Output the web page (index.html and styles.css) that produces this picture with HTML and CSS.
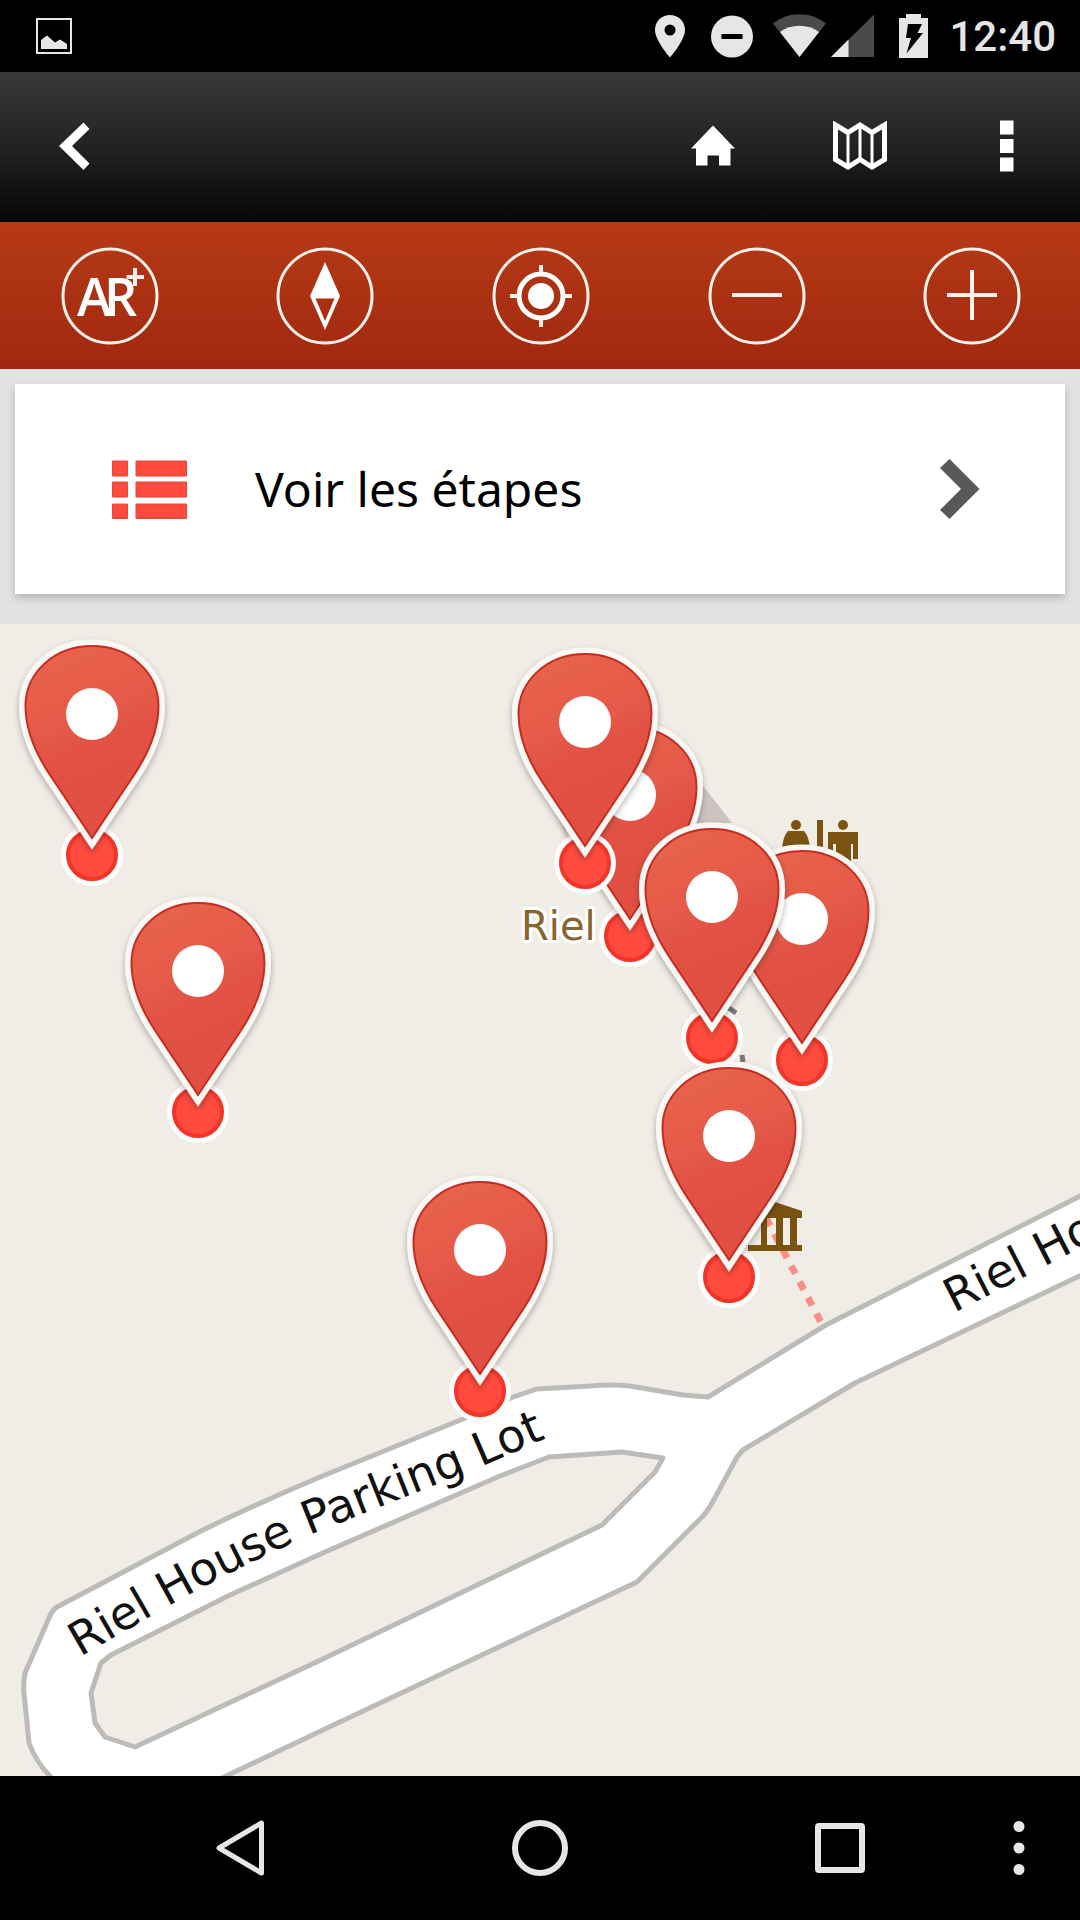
FILE: index.html
```html
<!DOCTYPE html>
<html lang="fr">
<head>
<meta charset="utf-8">
<meta name="viewport" content="width=device-width, initial-scale=1">
<title>Carte du circuit</title>
<link rel="stylesheet" href="styles.css">
</head>
<body>
<div class="screen">
  <div class="status">
    <svg class="status-shot" width="36" height="36" viewBox="0 0 36 36" aria-hidden="true"><rect x="1" y="1" width="34" height="34" fill="none" stroke="#e6e6e6" stroke-width="2"/><path d="M5 31V22L11 17.500L19 24.500L24 21.500L31 26V31z" fill="#e6e6e6"/></svg>
    <svg width="42" height="44" viewBox="0 0 42 44" aria-hidden="true"><path fill="#e6e6e6" fill-rule="evenodd" d="M21 1C12.500 1 6 7.500 6 16C6 26.500 21 43.500 21 43.500S36 26.500 36 16C36 7.500 29.500 1 21 1zM21 10.500a5.500 5.500 0 1 1 0 11a5.500 5.500 0 1 1 0-11z"/></svg>
    <svg width="42" height="44" viewBox="0 0 42 44" aria-hidden="true"><circle cx="21" cy="22.500" r="21" fill="#e6e6e6"/><path d="M10.500 22.500h21" stroke="#000" stroke-width="5"/></svg>
    <div class="signal">
      <svg width="53" height="44" viewBox="0 0 53 44" aria-hidden="true"><path d="M26.500 43L0 9.500C15-3 38-3 53 9.500z" fill="#4a4a4a"/><path d="M26.500 43L7 18C18 9.500 35 9.500 46 18z" fill="#e6e6e6"/></svg>
      <svg width="44" height="44" viewBox="0 0 44 44" aria-hidden="true"><path d="M0 43H43V0.500z" fill="#4a4a4a"/><path d="M0 43H17.500V25.500z" fill="#e6e6e6"/></svg>
    </div>
    <svg width="34" height="44" viewBox="0 0 34 44" aria-hidden="true"><path d="M4 4H11V0H26V4H33V44H4z" fill="#e6e6e6"/><path d="M13 10H27L22.500 19H28L11.500 39.500L16 24H11z" fill="#000"/></svg>
    <time class="clock">12:40</time>
  </div>

  <header class="appbar">
    <button class="bar-btn" type="button" aria-label="Retour"><svg width="32" height="52" viewBox="0 0 32 52"><path d="M25.500 1.500L31.500 8L14 25L31.500 42.500L25.500 49L1 25z" fill="#fff"/></svg></button>
    <nav class="actions" aria-label="Actions">
      <button class="bar-btn" type="button" aria-label="Accueil"><svg width="44" height="52" viewBox="0 0 44 52"><path d="M22 4.500L44 27.500H39.500V44.500H28V34.500H16.500V44.500H5V27.500H0z" fill="#fff"/></svg></button>
      <button class="bar-btn" type="button" aria-label="Carte"><svg width="54" height="52" viewBox="0 0 54 52"><path d="M2.500 4L15 11.500L27 4L39 11.500L51.500 4V38.500L39 46L27 38.500L15 46L2.500 38.500z" fill="none" stroke="#fff" stroke-width="5"/><path d="M15 11v34M27 5v34M39 11v34" stroke="#fff" stroke-width="3"/></svg></button>
      <button class="bar-btn" type="button" aria-label="Menu"><svg width="14" height="54" viewBox="0 0 14 54"><path d="M0 0.500h13.500v14H0zM0 19h13.500v14H0zM0 37.500h13.500v14H0z" fill="#fff"/></svg></button>
    </nav>
  </header>

  <nav class="toolbar" aria-label="Outils de carte">
    <button class="tool" type="button" aria-label="Réalité augmentée"><svg width="98" height="98" viewBox="-49 -49 98 98"><circle class="ring" r="47"/><g class="ar"><text x="-33" y="20">A</text><text x="-6" y="20">R</text></g><path class="thin" d="M16.500-19h17.500M25-28v18"/></svg></button>
    <button class="tool" type="button" aria-label="Boussole"><svg width="98" height="98" viewBox="-49 -49 98 98"><circle class="ring" r="47"/><path d="M0-34L15 0L0 34L-15 0z" fill="#fff"/><path d="M-9.500 2.500h19L0 25z" fill="#ab2e12"/></svg></button>
    <button class="tool" type="button" aria-label="Ma position"><svg width="98" height="98" viewBox="-49 -49 98 98"><circle class="ring" r="47"/><circle r="22" fill="none" stroke="#fff" stroke-width="5"/><circle r="13" fill="#fff"/><path class="thin" d="M-31 0h9M22 0h9M0-31v9M0 22v9"/></svg></button>
    <button class="tool" type="button" aria-label="Zoom arrière"><svg width="98" height="98" viewBox="-49 -49 98 98"><circle class="ring" r="47"/><path class="thin" d="M-25-1h50"/></svg></button>
    <button class="tool" type="button" aria-label="Zoom avant"><svg width="98" height="98" viewBox="-49 -49 98 98"><circle class="ring" r="47"/><path class="thin" d="M-25-1h50M0-26v50"/></svg></button>
  </nav>

  <div class="panel">
    <a class="card" href="#etapes">
      <svg width="75" height="60" viewBox="0 0 75 60" aria-hidden="true"><path d="M.5 2H15.500V17H.5zM24 2H74.500V17H24zM.5 23H15.500V38H.5zM24 23H74.500V38H24zM.5 45H15.500V59.500H.5zM24 45H74.500V59.500H24z" fill="#ff4b3e" stroke="#e84438"/></svg>
      <span class="card-label">Voir les étapes</span>
      <svg width="40" height="60" viewBox="0 0 40 60" aria-hidden="true"><path d="M9.500 0L39.500 30L9.500 60L0 51L21 30L0 9z" fill="#595959"/></svg>
    </a>
  </div>

  <main class="map">
    <svg class="map-canvas" viewBox="0 0 1080 1152" role="img" aria-label="Plan des étapes">
      <defs>
        <linearGradient id="pin-fill" x1="0.200" y1="0" x2="0.500" y2="1"><stop offset="0" stop-color="#e8634c"/><stop offset="0.400" stop-color="#e55a48"/><stop offset="0.600" stop-color="#e05043"/><stop offset="1" stop-color="#e04f42"/></linearGradient>
        <filter id="pin-shadow" x="-20%" y="-20%" width="140%" height="140%"><feDropShadow dx="0" dy="3" stdDeviation="3" flood-color="#000" flood-opacity="0.300"/></filter>
        <path id="teardrop" d="M0-68C38-68 66.500-41 66.500-8C66.500 18 56 40 42 61L0 124L-42 61C-56 40-66.500 18-66.500-8C-66.500-41-38-68 0-68z"/>
        <g id="pin">
          <circle cy="141" r="31" fill="#fff"/><circle cy="141" r="24" fill="#ff4b3e" stroke="#f23528" stroke-width="4"/>
          <use href="#teardrop" fill="#faf8f5" stroke="#faf8f5" stroke-width="13" filter="url(#pin-shadow)"/>
          <use href="#teardrop" fill="url(#pin-fill)" stroke="#c72b20" stroke-width="2"/>
          <circle r="26" fill="#fff"/>
        </g>
        <path id="lot-line" d="M80 1033L172 980Q240 942 312 910L480 843L570 804"/>
        <path id="road-line" d="M954 689L1180 573"/>
      </defs>

      <path class="building" d="M690 199V145L732 199z"/>
      <path class="road" fill-rule="evenodd" d="M1090 567L826 701L708 773L683 771L630 762Q611 760 590 762L537 765L513 773L463 795L325 851Q260 878 199 908L57 983Q52 986 49 994L25 1049Q23 1060 24 1069L29 1119Q36 1138 50 1152L60 1170H190L226 1152L325 1105L637 958L644 951L704 891L711 881L737 833L743 826L855 759L1090 647zM663 834L655 848L602 901L325 1034L135 1123L105 1113L95 1099L91 1069L101 1039L111 1031L230 971L325 928L500 852L549 833L622 828z"/>
      <path class="footpath" d="M766 594L824 704"/>

      <g class="poi">
        <path d="M749 592L775 578L802 587V594H749zM761 594h6v27h-6zM776 594h7v27h-7zM790 594h7v27h-7zM748 621h54v6h-54z"/>
        <circle cx="796" cy="201" r="5"/><path d="M788 207h16q5 5 6 18h-5v12h-18v-12h-5q1-13 6-18z"/>
        <path d="M817 196h6v40h-6z"/>
        <circle cx="843" cy="201" r="5"/><path d="M828 208h30v27h-5v-15h-2v22h-15v-22h-3v15h-5z"/>
      </g>
      <path class="speck" d="M729 384l7 5M742 431l1 7"/>

      <text class="label label-poi" x="521" y="316">Riel</text>
      <text class="label label-road"><textPath href="#lot-line">Riel House Parking Lot</textPath></text>
      <text class="label label-road"><textPath href="#road-line">Riel House</textPath></text>

      <use href="#pin" x="92" y="90"/>
      <use href="#pin" x="198" y="347"/>
      <use href="#pin" x="630" y="171"/>
      <use href="#pin" x="585" y="98"/>
      <use href="#pin" x="802" y="295"/>
      <use href="#pin" x="712" y="273"/>
      <use href="#pin" x="729" y="512"/>
      <use href="#pin" x="480" y="626"/>
    </svg>
  </main>

  <nav class="navbar" aria-label="Navigation système">
    <button class="nav-btn" type="button" aria-label="Précédent"><svg width="50" height="58" viewBox="0 0 50 58"><path d="M46.500 4V54L4 29z" fill="none" stroke="#e6e6e6" stroke-width="5" stroke-linejoin="round"/></svg></button>
    <button class="nav-btn" type="button" aria-label="Écran d’accueil"><svg width="56" height="56" viewBox="0 0 56 56"><circle cx="28" cy="28" r="25" fill="none" stroke="#e6e6e6" stroke-width="6"/></svg></button>
    <button class="nav-btn" type="button" aria-label="Applications récentes"><svg width="50" height="50" viewBox="0 0 50 50"><rect x="3" y="3" width="44" height="44" rx="1" fill="none" stroke="#e6e6e6" stroke-width="6" stroke-linejoin="round"/></svg></button>
    <button class="nav-btn" type="button" aria-label="Plus d’options"><svg width="12" height="56" viewBox="0 0 12 56"><g fill="#e6e6e6"><circle cx="6" cy="6.500" r="5.500"/><circle cx="6" cy="28" r="5.500"/><circle cx="6" cy="49.500" r="5.500"/></g></svg></button>
  </nav>
</div>
</body>
</html>
```
FILE: styles.css
```css
* {
  box-sizing: border-box;
}

body {
  margin: 0;
  background: #000;
  font-family: "Noto Sans", "Open Sans", sans-serif;
}

button {
  display: flex;
  align-items: center;
  justify-content: center;
  margin: 0;
  padding: 0;
  border: 0;
  background: none;
  color: inherit;
  cursor: pointer;
}

svg {
  display: block;
  flex: none;
}

.screen {
  display: flex;
  flex-direction: column;
  min-height: 100vh;
}

/* System status bar */
.status {
  display: flex;
  align-items: center;
  gap: 20px;
  height: 72px;
  padding: 0 24px 0 36px;
  background: #000;
  color: #e6e6e6;
}

.status-shot {
  margin-right: auto;
}

.signal {
  display: flex;
  gap: 5px;
}

.clock {
  padding-top: 2px;
  font: 500 42px/48px Roboto, sans-serif;
}

/* Application bar */
.appbar {
  display: flex;
  justify-content: space-between;
  height: 150px;
  background: linear-gradient(#3a3a3a, #222 50%, #060606);
}

.actions {
  display: flex;
}

.bar-btn {
  width: 147px;
  height: 100%;
}

/* Map tools */
.toolbar {
  display: grid;
  grid-template-columns: repeat(5, 1fr);
  height: 147px;
  padding-left: 2px;
  background: linear-gradient(#b63a15, #a12810);
}

.ring {
  fill: none;
  stroke: #fff2ec;
  stroke-width: 3px;
}

.thin {
  fill: none;
  stroke: #fff2ec;
  stroke-width: 4px;
}

.ar {
  fill: #fff;
  font: 600 52px "Open Sans", sans-serif;
}

/* Link to the list of stops */
.panel {
  padding: 15px 15px 30px;
  background: #e2e2e2;
}

.card {
  display: flex;
  align-items: center;
  height: 210px;
  padding: 0 85px 0 97px;
  gap: 68px;
  background: #fff;
  box-shadow: 0 4px 8px rgba(0, 0, 0, 0.2);
  color: #000;
  text-decoration: none;
}

.card-label {
  flex: 1;
  font-size: 48px;
  line-height: 64px;
}

/* Map */
.map {
  flex: 1;
  background: #f0ede6;
}

.map-canvas {
  width: 100%;
  height: auto;
  overflow: hidden;
}

.road {
  fill: #fff;
  stroke: #bdbbba;
  stroke-width: 5px;
  stroke-linejoin: round;
}

.building {
  fill: #cdc3c3;
}

.footpath {
  fill: none;
  stroke: #fb8f84;
  stroke-width: 7px;
  stroke-dasharray: 9px 9px;
}

.poi {
  fill: #7a5311;
}

.speck {
  fill: none;
  stroke: #777;
  stroke-width: 5px;
}

.label {
  font-family: "DejaVu Sans", sans-serif;
  paint-order: stroke;
  stroke: #fff;
  stroke-width: 6px;
  stroke-linejoin: round;
}

.label-poi {
  fill: #86652e;
  font-size: 40px;
}

.label-road {
  fill: #111;
  font-size: 46px;
}

/* System navigation */
.navbar {
  display: grid;
  grid-template-columns: repeat(3, 1fr) 58px;
  height: 144px;
  padding: 0 32px 0 90px;
  background: #000;
}
```
